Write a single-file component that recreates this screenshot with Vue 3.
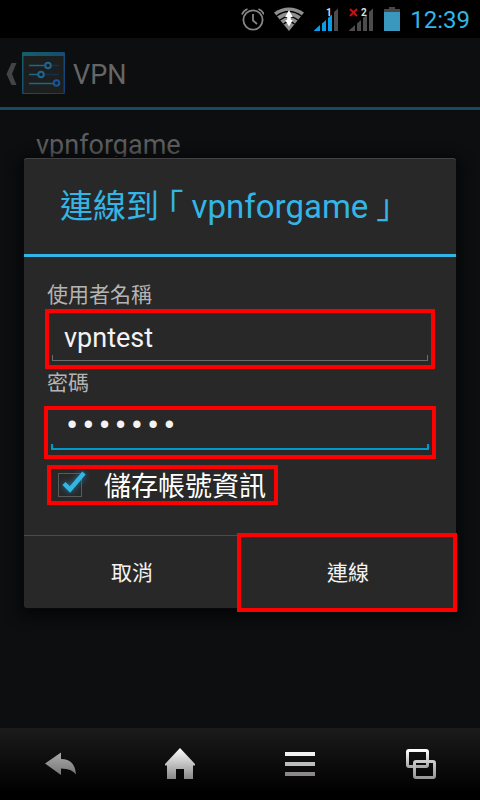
<script setup>
import { ref } from 'vue'

const username = ref('vpntest')
const password = ref('vpnpass')
const save = ref(true)
</script>

<template>
  <div class="phone">
    <header class="status">
      <svg width="24" height="24" viewBox="0 0 24 24" fill="none" stroke="#868686" stroke-width="1.8">
        <circle cx="13" cy="13" r="9.6" />
        <path d="M13 7v6.500l4 3.500M2 7.500Q3.500 3.500 7.500 2M18.500 2Q22.500 3.500 24 7.500" />
      </svg>
      <svg width="30" height="24" viewBox="0 0 30 24">
        <path d="M0 5.500Q15-4.500 30 5.500L15 24Z" fill="#8f8f8f" />
        <path d="M2.500 9Q15 0 27.500 9M6 13Q15 6 24 13M9.500 17Q15 12.500 20.500 17" fill="none" stroke="#000" stroke-width="1.3" />
        <path d="M15 3l3.800 7h-2v3h2l-3.800 6.500l-3.800-6.500h2v-3h-2z" fill="#fff" />
      </svg>
      <svg width="25" height="24" viewBox="0 0 25 24">
        <path d="M0 24V23.500L6 18V24zM8 24V16.500L12 13V24zM14 24V11L18 7.500V24z" fill="#0a9ce8" />
        <path d="M20 24V5L24 1.500V24z" fill="#4c4c4c" />
        <text x="12" y="9" class="sim">1</text>
      </svg>
      <svg width="25" height="24" viewBox="0 0 25 24">
        <path d="M0 24V23.500L6 18V24zM8 24V16.500L12 13V24zM14 24V11L18 7.500V24zM20 24V5L24 1.500V24z" fill="#4c4c4c" />
        <path d="M1 2l7 7M8 2l-7 7" stroke="#c01414" stroke-width="2" />
        <text x="12" y="9" class="sim">2</text>
      </svg>
      <svg width="16" height="24" viewBox="0 0 16 24">
        <path d="M5 0h6v2h5v4H0V2h5z" fill="#484848" />
        <path d="M0 5h16v19H0z" fill="#3a97bd" />
      </svg>
      <time>12:39</time>
    </header>

    <main class="screen">
      <div class="bar">
        <svg class="chevron" width="11" height="24" viewBox="0 0 11 24">
          <path d="M5.500 2h5L6 13 10.500 24h-5L0.500 13z" fill="#434446" />
        </svg>
        <svg width="44" height="42" viewBox="0 0 44 42">
          <defs>
            <linearGradient id="frame" x1="0" y1="0" x2="1" y2="1"><stop offset="0" stop-color="#15606a" /><stop offset="1" stop-color="#143a7c" /></linearGradient>
          </defs>
          <rect width="43" height="42" rx="1" fill="url(#frame)" />
          <path d="M1.500 4h40v37h-40z" fill="#1c1f1e" />
          <g fill="none" stroke="#1c6690" stroke-width="1.600">
            <path d="M7 13.500h16M7 22.500h9M7 31.500h24" />
            <path d="M29 13.500h8M22 22.500h15" stroke="#172c51" />
            <circle cx="26" cy="13.500" r="2.800" stroke-width="2" />
            <circle cx="19" cy="22.500" r="2.800" stroke-width="2" />
            <circle cx="34.500" cy="31" r="2.800" stroke-width="2" stroke="#17569a" />
          </g>
        </svg>
        <h1>VPN</h1>
      </div>
      <div class="entry">vpnforgame</div>

      <div class="layer">
        <form class="dialog" role="dialog" aria-labelledby="title" @submit.prevent>
          <h2 id="title"><span>連線到</span><span class="quote">「</span><span>vpnforgame</span><span class="quote">」</span></h2>
          <div class="body">
            <label class="caption" for="user">使用者名稱</label>
            <div class="field mark user">
              <input id="user" v-model="username" type="text" autocomplete="off" />
            </div>
            <label class="caption" for="pass">密碼</label>
            <div class="field focus mark pass">
              <input id="pass" v-model="password" type="password" autocomplete="off" />
            </div>
            <label class="save mark">
              <span class="tick">
                <input v-model="save" type="checkbox" />
                <svg v-if="save" width="30" height="26" viewBox="0 0 30 26">
                  <path d="M6 12.500l6 6L26 2" fill="none" stroke="#33b5e5" stroke-width="4.500" />
                </svg>
              </span>
              <span class="save-text">儲存帳號資訊</span>
            </label>
          </div>
          <div class="actions">
            <button type="button">取消</button>
            <button type="submit" class="mark connect">連線</button>
          </div>
        </form>
      </div>
    </main>

    <nav class="keys">
      <button type="button" aria-label="返回">
        <svg width="32" height="32" viewBox="0 0 32 32">
          <defs>
            <linearGradient id="g1" x1="0" y1="0" x2="0" y2="1"><stop offset="0" stop-color="#aaa" /><stop offset="1" stop-color="#777" /></linearGradient>
          </defs>
          <path d="M1 15.500L17 4.500V11Q31 11 32 26.500Q28 20.500 17 20.500V27Z" fill="url(#g1)" />
        </svg>
      </button>
      <button type="button" aria-label="首頁">
        <svg width="32" height="32" viewBox="0 0 32 32">
          <defs>
            <linearGradient id="g2" x1="0" y1="0" x2="0" y2="1"><stop offset="0" stop-color="#fff" /><stop offset="1" stop-color="#888" /></linearGradient>
          </defs>
          <path d="M16 0L31 16v1.500h-2V31H20V21H12V31H3V17.500H1V16z" fill="url(#g2)" />
        </svg>
      </button>
      <button type="button" aria-label="選單">
        <svg width="32" height="32" viewBox="0 0 32 32">
          <path d="M1 4h30v4H1z" fill="#f2f2f2" />
          <path d="M1 14h30v4H1z" fill="#bdbdbd" />
          <path d="M1 24h30v4H1z" fill="#8c8888" />
        </svg>
      </button>
      <button type="button" aria-label="最近使用">
        <svg width="32" height="32" viewBox="0 0 32 32" fill="none" stroke-width="3">
          <defs>
            <linearGradient id="g3" x1="0" y1="0" x2="0" y2="1"><stop offset="0" stop-color="#fff" /><stop offset="1" stop-color="#aaa" /></linearGradient>
            <linearGradient id="g4" x1="0" y1="0" x2="0" y2="1"><stop offset="0" stop-color="#ccc" /><stop offset="1" stop-color="#999" /></linearGradient>
          </defs>
          <rect x="3.500" y="2.500" width="20" height="16" rx="1.500" stroke="url(#g3)" />
          <rect x="10.500" y="13.500" width="20" height="16" rx="1.500" stroke="url(#g4)" />
        </svg>
      </button>
    </nav>
  </div>
</template>

<style>
body {
  background: #0c0d0f;
}
</style>

<style scoped>
.phone {
  display: flex;
  flex-direction: column;
  min-height: 100vh;
  background: #0c0e10;
  font-family: Roboto, 'Noto Sans CJK TC', sans-serif;
}
svg {
  display: block;
  flex: none;
}
.status {
  display: flex;
  align-items: center;
  justify-content: flex-end;
  gap: 10px;
  height: 38px;
  padding-right: 10px;
  background: #000;
}
.status time {
  color: #33b5e5;
  font-size: 24px;
  line-height: 36px;
  padding-top: 2px;
}
.sim {
  fill: #ddd;
  font-size: 10px;
  font-weight: 700;
}
.screen {
  position: relative;
  flex: 1;
}
.bar {
  display: flex;
  align-items: center;
  height: 69px;
  padding: 0 6px;
  border-bottom: 3px solid #174b5f;
}
.chevron {
  margin-right: 5px;
}
h1 {
  margin: 0;
  padding: 4px 0 0 7px;
  color: #656667;
  font-size: 27px;
  font-weight: 400;
}
.entry {
  padding: 18px 36px;
  color: #5b5c5d;
  font-size: 27px;
  line-height: 34px;
}
.layer {
  position: absolute;
  inset: 0;
  display: flex;
  align-items: center;
  padding: 0 24px;
}
.dialog {
  flex: 1;
  border-radius: 3px;
  background: #282828;
  box-shadow: 0 0 0 1px #08090a, 0 4px 14px 4px #050607, inset 0 1px #444;
}
h2 {
  display: flex;
  gap: 8px;
  margin: 0;
  padding: 2px 36px 0;
  border-bottom: 3px solid #33b5e5;
  color: #33b5e5;
  font-size: 33px;
  font-weight: 400;
  line-height: 94px;
  white-space: nowrap;
}
.quote {
  font-feature-settings: 'halt';
}
.body {
  display: flex;
  flex-direction: column;
  padding: 24px 23px 30px;
}
.caption {
  color: #b4b4b4;
  font-size: 21px;
  line-height: 28px;
}
.field {
  height: 48px;
  margin: 4px 5px 8px;
}
.field input {
  box-sizing: border-box;
  width: 100%;
  height: 48px;
  padding: 2px 12px 0;
  border: 0;
  outline: 0;
  color: #f3f3f3;
  font: 27px Roboto, sans-serif;
  --line: #6b6b6b;
  --w: 1px;
  background:
    linear-gradient(var(--line), var(--line)) bottom / 100% var(--w) no-repeat,
    linear-gradient(var(--line), var(--line)) left bottom / var(--w) 6px no-repeat,
    linear-gradient(var(--line), var(--line)) right bottom / var(--w) 6px no-repeat;
}
.focus {
  margin: 5px 4px 15px;
}
.focus input {
  --line: #0099cc;
  --w: 2px;
  padding: 0 13px;
  font-family: 'Liberation Mono', monospace;
}
.mark {
  position: relative;
}
.mark::after {
  content: '';
  position: absolute;
  inset: 0;
  border: 4px solid #f00;
  pointer-events: none;
}
.user::after {
  inset: -4px -7px -8px;
}
.pass::after {
  inset: 4px -7px -9px;
}
.save {
  display: flex;
  align-items: center;
  align-self: flex-start;
  gap: 22px;
  height: 40px;
  padding: 0 12px 0 11px;
  color: #fff;
  font-size: 27px;
}
.save-text {
  padding-bottom: 2px;
}
.tick {
  position: relative;
}
.tick input {
  display: block;
  appearance: none;
  width: 24px;
  height: 24px;
  margin: 0;
  border: 1px solid #5a5a5a;
}
.tick svg {
  position: absolute;
  left: 0;
  bottom: 0;
  filter: drop-shadow(0 0 3px #1f7fa5);
}
.actions {
  display: grid;
  grid-template-columns: 1fr 1fr;
  border-top: 1px solid #4a4a4a;
}
.actions button {
  height: 72px;
  padding: 0 0 2px;
  border: 0;
  background: none;
  color: #f3f3f3;
  font: 21px Roboto, 'Noto Sans CJK TC', sans-serif;
}
.connect::after {
  inset: -3px -1px -4px -3px;
}
.keys {
  display: grid;
  grid-template-columns: repeat(4, 1fr);
  height: 72px;
  background: linear-gradient(#1b1b1b, #000 90%);
}
.keys button {
  display: grid;
  place-items: center;
  padding: 0;
  border: 0;
  background: none;
}
</style>
